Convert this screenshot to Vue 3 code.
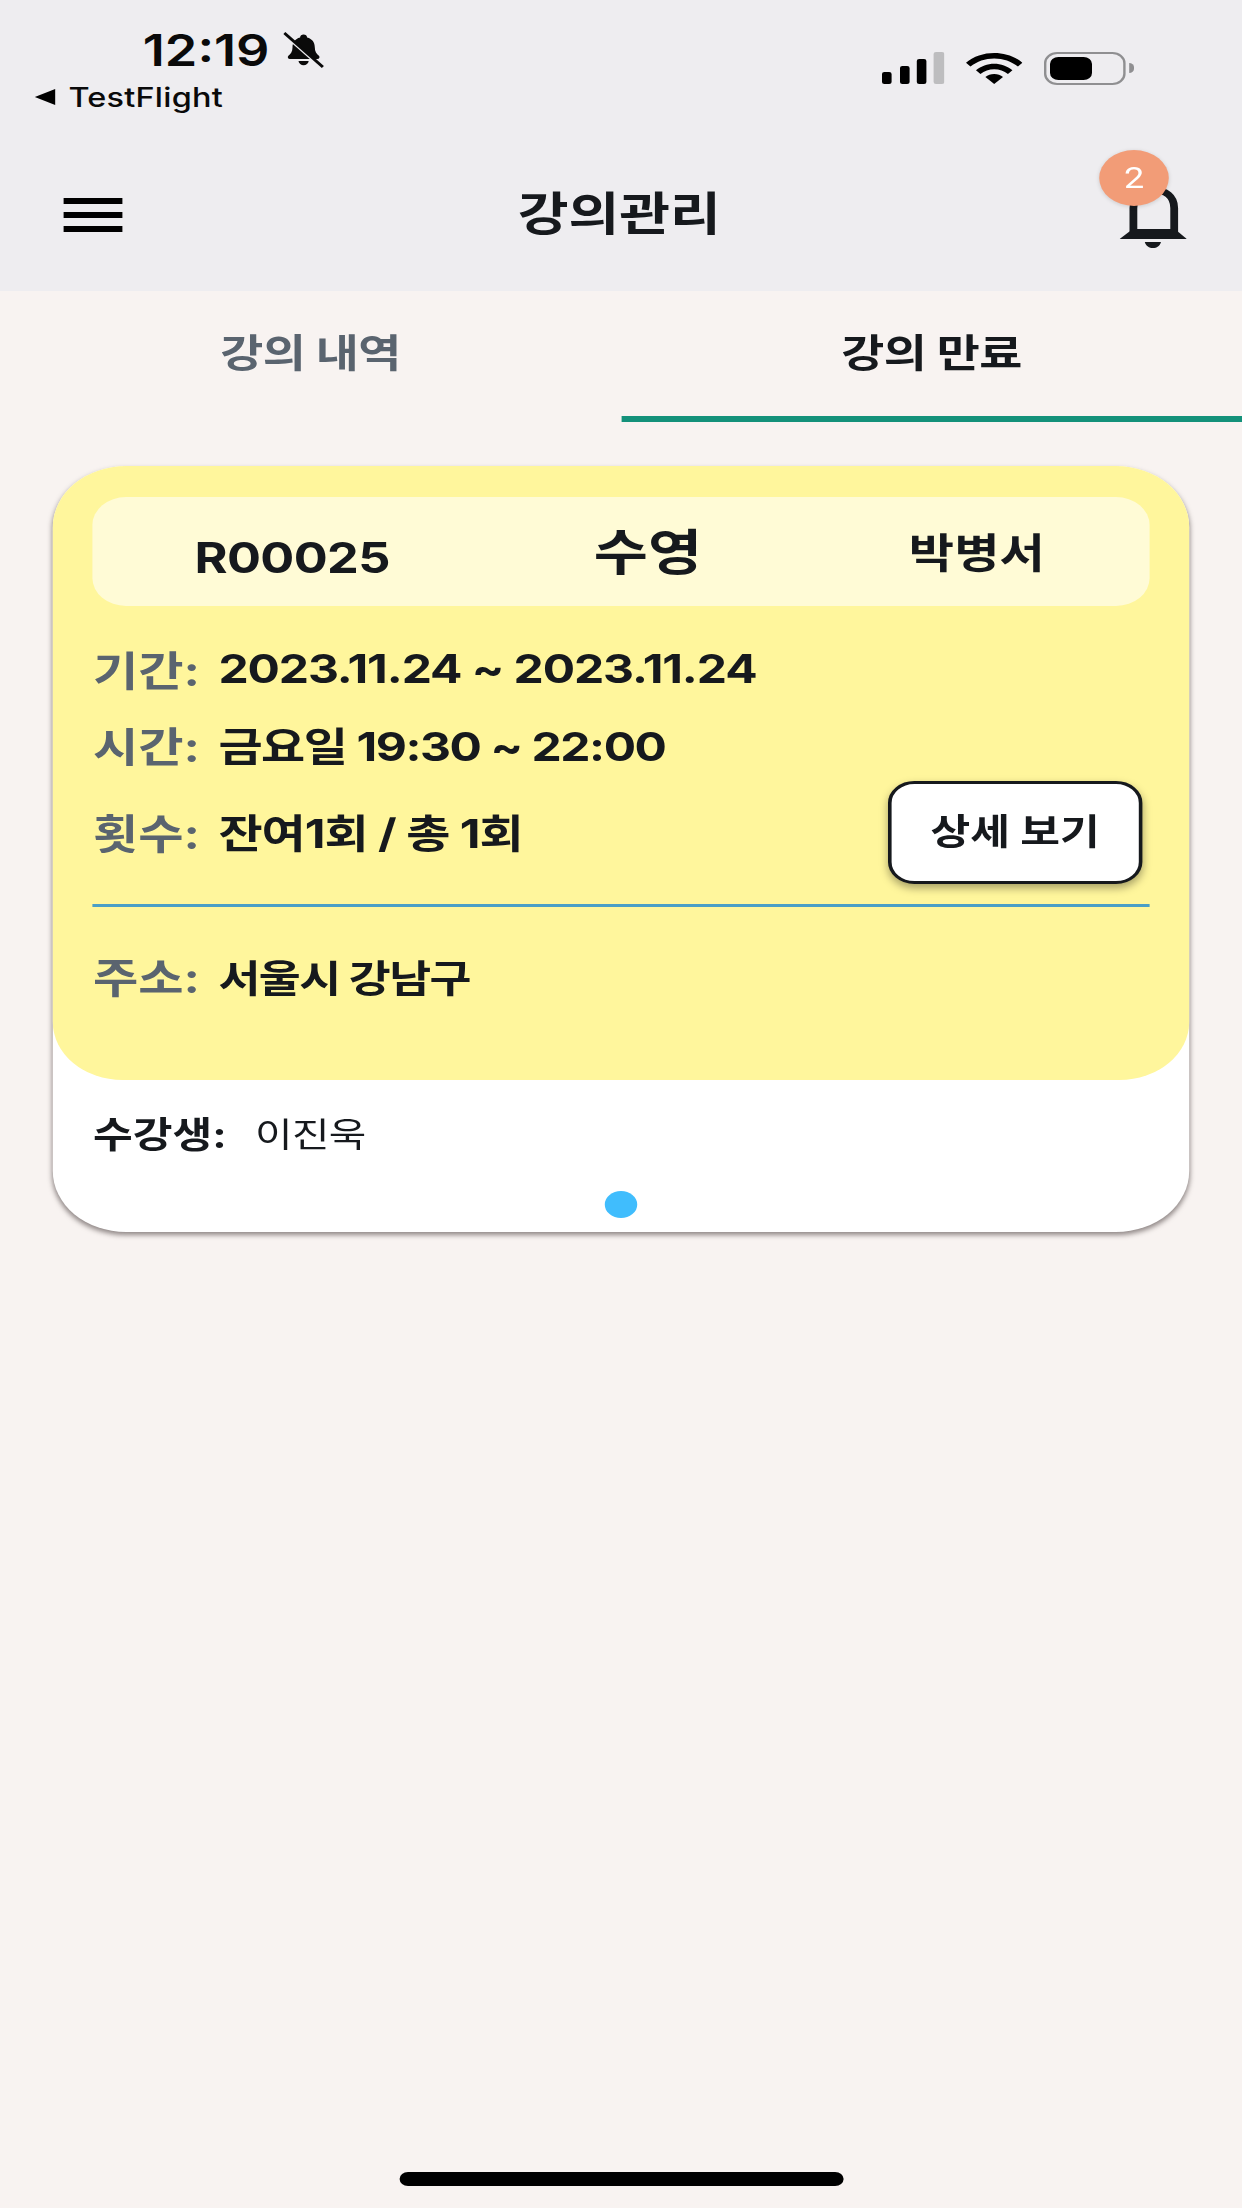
<script setup>
const rows = [
  { label: '기간:', value: '2023.11.24 ~ 2023.11.24', cls: 'r1' },
  { label: '시간:', value: '금요일 19:30 ~ 22:00', cls: 'r2' }
]
</script>

<template>
  <div class="page">
    <div class="stage">
      <header class="top">
        <div class="status">
          <div class="status-left">
            <div class="time-line">
              <span class="time">12:19</span>
              <svg class="mute" viewBox="0 0 36 36" width="34" height="36" preserveAspectRatio="none">
                <path d="M18 2.500c1.800 0 3 1.200 3.100 2.900 4.600 1.300 6.800 5 6.800 10 0 4.200 1.500 6.200 3.600 8.300 1.100 1.100.5 3.300-1.400 3.300H6c-1.900 0-2.500-2.200-1.400-3.300 2.100-2.100 3.600-4.100 3.600-8.300 0-5 2.200-8.700 6.700-10C15 3.700 16.200 2.500 18 2.500z" fill="#0a0a0a"/>
                <path d="M13.500 29h9c-.3 2.500-2.200 4.200-4.500 4.200s-4.200-1.700-4.500-4.200z" fill="#0a0a0a"/>
                <path d="M3 4.500l29 29" stroke="#eeedf0" stroke-width="3"/>
                <path d="M1 1l34 34" stroke="#0a0a0a" stroke-width="2.600"/>
              </svg>
            </div>
            <div class="back"><span class="tri"></span>TestFlight</div>
          </div>
          <div class="status-right">
            <svg viewBox="0 0 52 32" width="52" height="32">
              <rect x="0" y="20" width="8" height="12" rx="2" fill="#000"/>
              <rect x="15" y="14" width="8" height="18" rx="2" fill="#000"/>
              <rect x="29" y="7" width="8" height="25" rx="2" fill="#000"/>
              <rect x="43" y="0" width="9" height="32" rx="2" fill="#bdbdbf"/>
            </svg>
            <svg class="wifi" viewBox="0 0 48 34" width="47" height="32" preserveAspectRatio="none">
              <path d="M0 11.500C6.500 4.500 15 1 24 1s17.500 3.500 24 10.500l-3.800 4C38.700 9.800 31.600 6.800 24 6.800S9.300 9.800 3.800 15.500z" fill="#000"/>
              <path d="M8.500 19.500C12.800 15 18.200 12.500 24 12.500s11.200 2.500 15.500 7l-3.800 4c-3.300-3.300-7.300-5.200-11.700-5.200s-8.400 1.900-11.700 5.200z" fill="#000"/>
              <path d="M24 23.500c2.900 0 5.500 1.100 7.500 3.100L24 34l-7.500-7.400c2-2 4.600-3.100 7.500-3.100z" fill="#000"/>
            </svg>
            <div class="battery"><span class="battery-level"></span></div>
            <span class="battery-cap"></span>
          </div>
        </div>
        <nav class="nav">
          <div class="burger"><span></span><span></span><span></span></div>
          <h1 class="title">강의관리</h1>
          <div class="bell-wrap">
            <svg class="bell" viewBox="0 0 56 60" width="56" height="60">
              <path d="M11.500 44V20C11.500 8 19 2 28.500 2S45.500 8 45.500 20V44" fill="none" stroke="#16191d" stroke-width="6.500"/>
              <path d="M0 51 11 41H46L56 51z" fill="#16191d"/>
              <path d="M21 54H34.500C33.500 58 31 60 27.800 60S22 58 21 54z" fill="#16191d"/>
            </svg>
            <span class="badge">2</span>
          </div>
        </nav>
      </header>

      <div class="tabs">
        <div class="tab">강의 내역</div>
        <div class="tab active">강의 만료</div>
      </div>

      <section class="card">
        <div class="yellow">
          <div class="pill">
            <span class="code">R00025</span>
            <span class="subject">수영</span>
            <span class="teacher">박병서</span>
          </div>
          <div v-for="r in rows" :key="r.label" class="row" :class="r.cls">
            <span class="label">{{ r.label }}</span>
            <span class="value">{{ r.value }}</span>
          </div>
          <div class="row r3">
            <span class="label">횟수:</span>
            <span class="value count">잔여1회 / 총 1회</span>
            <button class="detail">상세 보기</button>
          </div>
          <div class="divider"></div>
          <div class="row r4">
            <span class="label">주소:</span>
            <span class="value addr">서울시 강남구</span>
          </div>
        </div>
        <div class="student">
          <span class="s-label">수강생:</span>
          <span class="s-name">이진욱</span>
        </div>
        <div class="dots"><span class="dot"></span></div>
      </section>

      <div class="home"></div>
    </div>
  </div>
</template>

<style>
html, body { margin: 0; padding: 0; }
</style>

<style scoped>
.page {
  width: 1242px;
  height: 2208px;
  background: #f8f3f1;
  overflow: hidden;
}
/* the reference is stretched 1.2x horizontally */
.stage {
  width: 1035px;
  height: 2208px;
  transform: scale(1.2, 1);
  transform-origin: left top;
  display: flex;
  flex-direction: column;
  font-family: Inter, "Noto Sans CJK KR", sans-serif;
  color: #16191d;
}
.top { height: 291px; background: #eeedf0; flex: none; }
.status {
  height: 148px;
  display: flex;
  justify-content: space-between;
  box-sizing: border-box;
  padding: 24px 90px 0 29px;
}
.time-line { display: flex; align-items: center; margin-left: 90px; height: 52px; }
.time { font-size: 43.500px; font-weight: 600; color: #0a0a0a; line-height: 52px; }
.mute { margin-left: 11px; }
.back { display: flex; align-items: center; font-size: 27px; font-weight: 500; color: #0a0a0a; height: 36px; margin-top: 3px; letter-spacing: 0.2px; }
.tri { width: 0; height: 0; border-style: solid; border-width: 8.500px 17.500px 8.500px 0; border-color: transparent #000 transparent transparent; margin-right: 11px; }
.status-right { display: flex; align-items: flex-start; padding-top: 28px; }
.wifi { margin-left: 18px; }
.battery {
  margin-left: 18px;
  width: 68px;
  height: 33px;
  box-sizing: border-box;
  border: 2px solid #8f8f91;
  border-radius: 11px;
  padding: 3px 3px;
}
.battery-level { display: block; width: 35px; height: 23px; background: #000; border-radius: 7px; }
.battery-cap { width: 4px; height: 10px; background: #8f8f91; border-radius: 0 4px 4px 0; margin: 11px 0 0 3px; }
.nav {
  height: 143px;
  display: grid;
  grid-template-columns: 1fr auto 1fr;
  align-items: center;
  padding: 0 46.500px 0 52.500px;
}
.burger { display: flex; flex-direction: column; gap: 8px; margin-top: -10px; }
.burger span { display: block; width: 49px; height: 6px; background: #000; }
.title { margin: -13px 0 0 -9px; font-size: 46px; font-weight: 700; line-height: 70px; color: #16191d; }
.bell-wrap { position: relative; justify-self: end; width: 56px; height: 60px; margin-top: -3px; }
.bell { display: block; }
.badge {
  position: absolute;
  left: -16.500px;
  top: -38px;
  width: 58px;
  height: 56px;
  border-radius: 50%;
  background: #f29c77;
  box-shadow: 0 1px 4px rgba(0, 0, 0, .15);
  color: #fff;
  font-size: 30px;
  font-family: Roboto, sans-serif;
  text-align: center;
  line-height: 56px;
}
.tabs { display: flex; height: 131px; flex: none; }
.tab {
  flex: 1;
  box-sizing: border-box;
  text-align: center;
  font-size: 39px;
  font-weight: 700;
  line-height: 124px;
  letter-spacing: -0.5px;
  color: #5a646f;
  border-bottom: 6px solid transparent;
}
.tab.active { color: #16191d; border-bottom-color: #14917a; }
.card {
  margin: 44px 44px 0 44.200px;
  height: 766px;
  flex: none;
  background: #fff;
  border-radius: 61px;
  box-shadow: 0 3px 5px rgba(60, 50, 50, .55);
  display: flex;
  flex-direction: column;
}
.yellow {
  height: 614px;
  flex: none;
  box-sizing: border-box;
  background: #fff69c;
  border-radius: 61px 61px 58px 58px;
  padding: 31px 33.300px 0 33.300px;
}
.pill {
  height: 109px;
  box-sizing: border-box;
  background: #fffbd6;
  border-radius: 28px;
  display: grid;
  grid-template-columns: 332px 261px 287px;
  align-items: center;
  text-align: center;
}
.code { font-size: 42px; font-weight: 700; letter-spacing: -0.5px; padding-top: 12px; }
.subject { font-size: 49px; font-weight: 700; margin-top: -6px; }
.teacher { font-size: 41px; font-weight: 700; margin-top: -4px; }
.row { display: flex; align-items: center; height: 60px; position: relative; }
.r1 { margin-top: 32px; }
.r2 { margin-top: 16px; }
.r3 { margin-top: 27px; }
.r4 { margin-top: 38px; }
.label { width: 104.500px; flex: none; font-size: 41px; font-weight: 700; color: #5a646f; }
.value { font-size: 40px; font-weight: 700; color: #16191d; letter-spacing: -0.9px; }
.r2 .value { letter-spacing: -1.200px; }
.count { letter-spacing: -0.8px; }
.addr { font-size: 38px; letter-spacing: -1.300px; }
.detail {
  position: absolute;
  right: 5.800px;
  top: -20px;
  width: 212px;
  height: 103px;
  box-sizing: border-box;
  background: #fff;
  border: 3px solid #16191d;
  border-radius: 22px;
  box-shadow: 0 4px 8px rgba(0, 0, 0, .35);
  font-family: inherit;
  font-size: 36px;
  font-weight: 700;
  color: #16191d;
  padding: 0 0 8px;
}
.divider { height: 3px; background: #4a9fc6; margin-top: 43px; }
.student { display: flex; align-items: center; padding: 0 0 0 33.300px; height: 60px; margin-top: 22px; flex: none; }
.s-label { font-size: 36px; font-weight: 700; color: #16191d; width: 135px; flex: none; }
.s-name { font-size: 34px; font-weight: 400; color: #16191d; letter-spacing: -0.5px; }
.dots { display: flex; justify-content: center; margin-top: 29px; }
.dot { width: 27.500px; height: 27px; border-radius: 50%; background: #40bdfd; }
.home { margin: auto 0 22px 332.500px; width: 370px; height: 14px; background: #000; border-radius: 7px; flex: none; }
</style>
